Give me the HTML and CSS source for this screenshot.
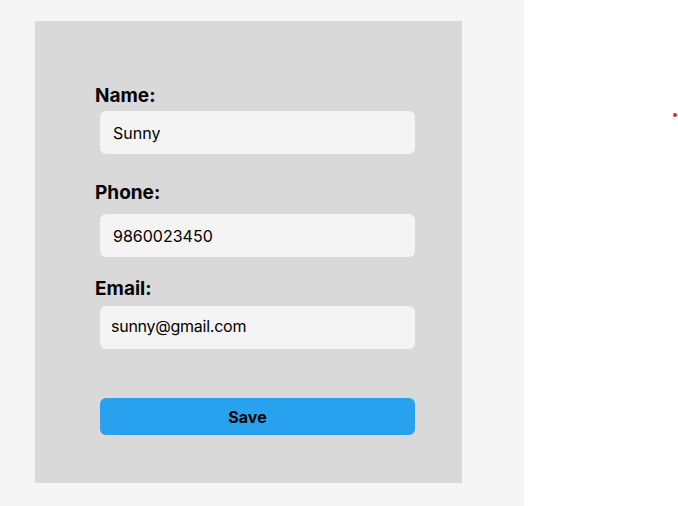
FILE: index.html
```html
<!DOCTYPE html>
<html>
<head>
<meta charset="utf-8">
<link rel="stylesheet" href="styles.css">
</head>
<body>
<div class="page">
  <div class="panel">
    <form class="card">
      <div class="field field-name">
        <label class="label">Name:</label>
        <input class="input" type="text" value="Sunny">
      </div>
      <div class="field field-phone">
        <label class="label">Phone:</label>
        <input class="input" type="text" value="9860023450">
      </div>
      <div class="field field-email">
        <label class="label">Email:</label>
        <input class="input input-email" type="text" value="sunny@gmail.com">
      </div>
      <button class="save" type="button">Save</button>
    </form>
  </div>
  <div class="canvas">
    <span class="dot"></span>
  </div>
</div>
</body>
</html>
```

FILE: styles.css
```css
html, body {
  margin: 0;
  padding: 0;
  background: #ffffff;
  font-family: Inter, "Noto Sans", sans-serif;
}

.page {
  display: flex;
  width: 678px;
  height: 506px;
}

.panel {
  width: 524px;
  height: 506px;
  box-sizing: border-box;
  background: #f5f5f5;
  padding: 21px 62px 23px 35px;
}

.card {
  width: 427px;
  height: 462px;
  box-sizing: border-box;
  background: #d9d9d9;
  padding: 64px 0 0 60px;
  margin: 0;
  display: flex;
  flex-direction: column;
  align-items: flex-start;
}

.field {
  display: flex;
  flex-direction: column;
  align-items: flex-start;
}

.field-phone { margin-top: 27.5px; }
.field-email { margin-top: 21px; }

.label {
  font-size: 19px;
  line-height: 22px;
  font-weight: 700;
  color: #000;
}

.input {
  width: 315px;
  height: 43px;
  box-sizing: border-box;
  margin: 4px 0 0 5px;
  border: none;
  outline: none;
  border-radius: 6px;
  background: #f4f4f4;
  padding: 0 0 0 13px;
  font-family: Inter, "Noto Sans", sans-serif;
  font-size: 16px;
  color: #000;
}

.field-phone .input { margin-top: 10.5px; }
.field-email .input { margin-top: 6px; }

.input-email {
  padding: 0 0 3px 11px;
  letter-spacing: -0.25px;
}

.save {
  width: 315px;
  height: 37px;
  margin: 49px 0 0 5px;
  border: none;
  border-radius: 6px;
  background: #28a2ef;
  padding: 0 20px 0 0;
  font-family: Inter, "Noto Sans", sans-serif;
  font-size: 16px;
  font-weight: 700;
  color: #000;
}

.canvas {
  flex: 1;
  position: relative;
}

.dot {
  position: absolute;
  left: 149px;
  top: 113px;
  width: 4px;
  height: 4px;
  border-radius: 50%;
  background: #e8202a;
}
```
